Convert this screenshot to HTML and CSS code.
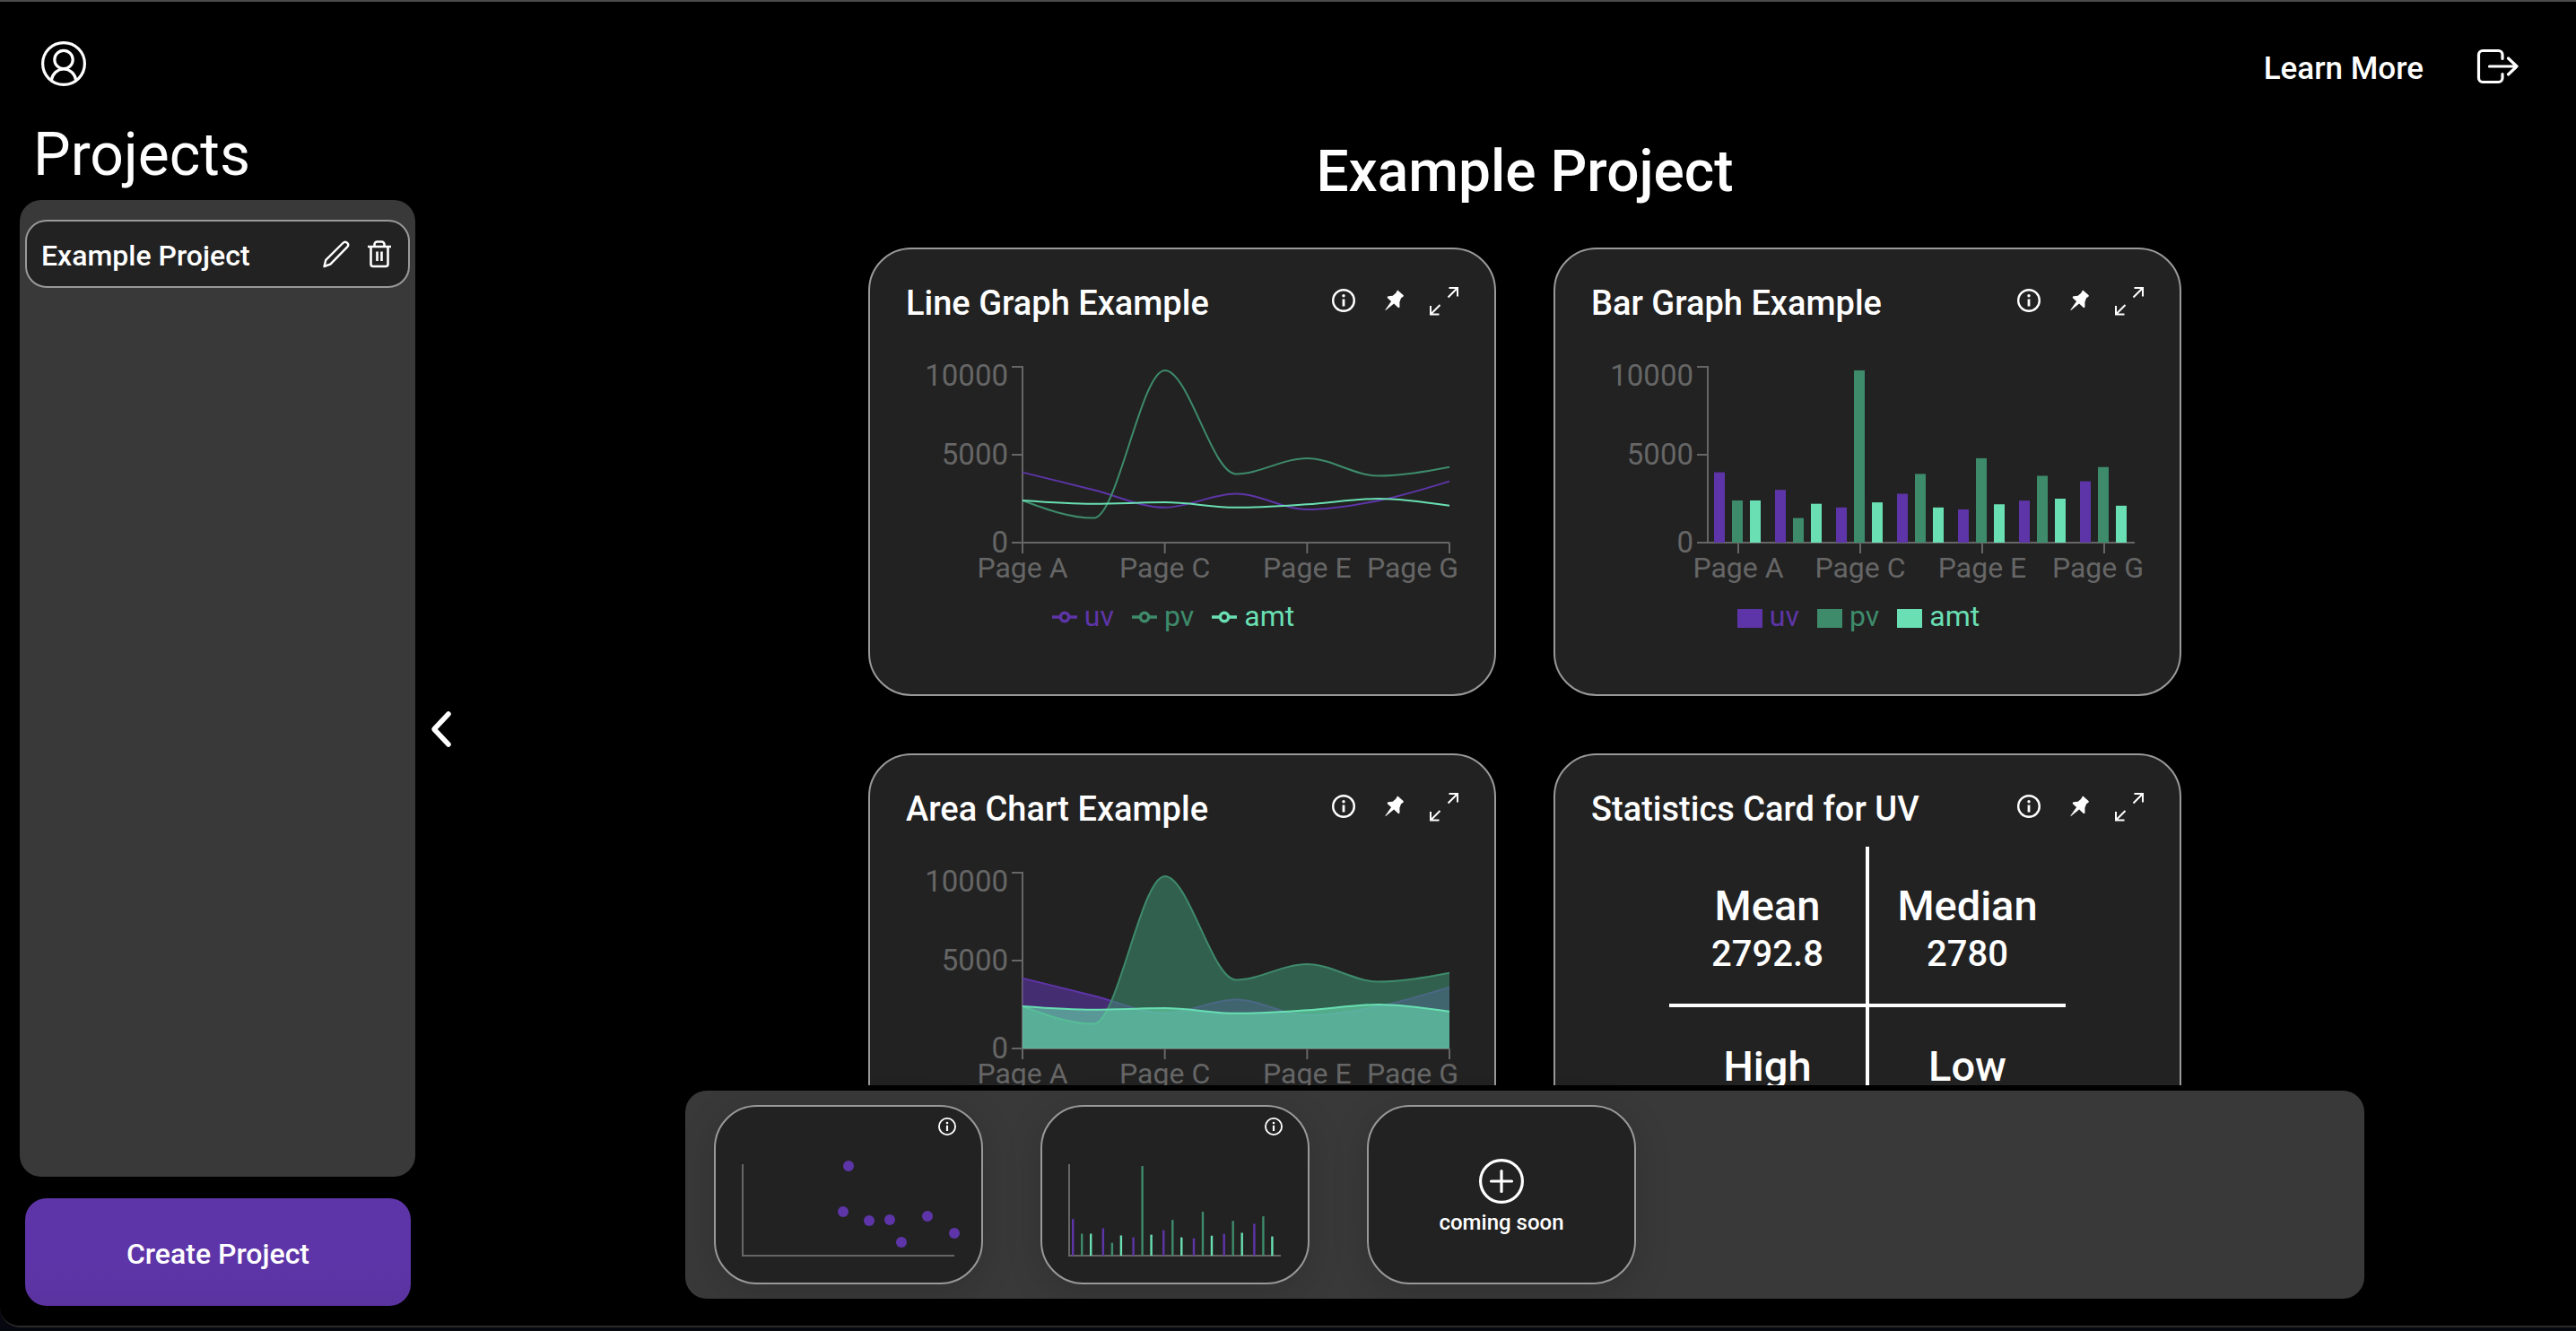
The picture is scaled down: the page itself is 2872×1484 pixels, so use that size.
FILE: index.html
```html
<!DOCTYPE html>
<html lang="en">
<head>
<meta charset="utf-8">
<title>Projects</title>
<meta name="viewport" content="width=device-width, initial-scale=1">
<link rel="stylesheet" href="styles.css">
</head>
<body>
<svg class="sprite" aria-hidden="true">
  <symbol id="icon-info" viewBox="0 0 32 32">
    <circle cx="16" cy="15" r="11.8" fill="none" stroke="currentColor" stroke-width="2.4"/>
    <circle cx="16" cy="9.8" r="1.7" fill="currentColor"/>
    <path d="M16 13.5v8" stroke="currentColor" stroke-width="2.8"/>
  </symbol>
  <symbol id="icon-pin" viewBox="0 0 32 32">
    <path d="M19.600 4.200c.5-.5 1-.5 1.500 0l5.400 4.800c.6.6.4 1.300-.4 1.900l-2 1.300-1.700 4.600.1 4.900c0 1.300-1 1.900-1.900 1l-4.500-4.200-9.200 7.500-.5-.5 6.700-9.400-3.900-3.700c-.9-.9-.4-1.800.8-2.100l4.700-.6 3.500-3z" fill="currentColor"/>
  </symbol>
  <symbol id="icon-expand" viewBox="0 0 32 32">
    <path d="M20.500 11.500 31 1M21.500 1H31v9.500M11.500 20 1 30.500M1 21v9.500h9.500" fill="none" stroke="currentColor" stroke-width="2"/>
  </symbol>
</svg>
<div class="window">
  <aside class="sidebar">
    <button class="icon-button account" type="button" aria-label="Account">
      <svg width="52" height="52" viewBox="0 0 52 52" fill="none" stroke="currentColor" stroke-width="3.200"><circle cx="26" cy="26" r="23.400"/><circle cx="26" cy="21.500" r="10.200"/><path d="M12.300 44.500c1-7.500 6.800-12.500 13.700-12.500s12.700 5 13.700 12.500"/></svg>
    </button>
    <h2 class="sidebar-title">Projects</h2>
    <ul class="project-list">
      <li class="project">
        <span class="project-name">Example Project</span>
        <button class="icon-button" type="button" aria-label="Rename project">
          <svg width="32" height="32" viewBox="0 0 32 32" fill="none" stroke="currentColor" stroke-width="2.400" stroke-linejoin="round"><path d="M2.500 30l1.800-7.200L23.300 4c1.600-1.600 3.500-1.600 4.900-.2s1.300 3.300-.3 4.900L9.300 27.700z"/></svg>
        </button>
        <button class="icon-button" type="button" aria-label="Delete project">
          <svg width="32" height="32" viewBox="0 0 32 32" fill="none" stroke="currentColor" stroke-width="2.600" stroke-linejoin="round"><path d="M3 8h26M10.500 8V5.500a3 3 0 0 1 3-3h5a3 3 0 0 1 3 3V8M6.500 8v19.500a2.500 2.500 0 0 0 2.500 2.500h14a2.500 2.500 0 0 0 2.500-2.500V8M13.500 13.500v10.500M18.500 13.500v10.500"/></svg>
        </button>
      </li>
    </ul>
    <button class="create-project" type="button">Create Project</button>
  </aside>
  <button class="icon-button sidebar-toggle" type="button" aria-label="Collapse sidebar">
    <svg width="24" height="44" viewBox="0 0 24 44" fill="none" stroke="currentColor" stroke-width="5.500" stroke-linecap="round" stroke-linejoin="round"><path d="M20 5 4 22l16 17"/></svg>
  </button>
  <main class="main">
    <nav class="topbar">
      <a class="topbar-link" href="#">Learn More</a>
      <button class="icon-button" type="button" aria-label="Log out">
        <svg width="48" height="48" viewBox="0 0 48 48" fill="none" stroke="currentColor" stroke-width="3.200" stroke-linecap="round" stroke-linejoin="round"><path d="M30 15.500V11a4.500 4.500 0 0 0-4.500-4.500H8A4.500 4.500 0 0 0 3.500 11v26A4.500 4.500 0 0 0 8 41.500h17.500A4.500 4.500 0 0 0 30 37v-4.500M15.500 24H46M36.500 15l9.500 9-9.500 9"/></svg>
      </button>
    </nav>
    <h1 class="page-title">Example Project</h1>
    <div class="board">
      <article class="card">
        <header class="card-header">
          <h2 class="card-title">Line Graph Example</h2>
          <button class="icon-button" type="button" aria-label="Info"><svg width="32" height="32"><use href="#icon-info"/></svg></button>
          <button class="icon-button" type="button" aria-label="Pin"><svg width="32" height="32"><use href="#icon-pin"/></svg></button>
          <button class="icon-button" type="button" aria-label="Expand"><svg width="32" height="32"><use href="#icon-expand"/></svg></button>
        </header>
        <svg class="chart" viewBox="0 0 616 268" data-chart="line" role="img" aria-label="Line graph"></svg>
        <ul class="legend">
          <li class="uv"><svg width="28" height="28" viewBox="0 0 32 32" fill="none" stroke="currentColor" stroke-width="4"><path d="M0 16h10.700M21.300 16H32"/><circle cx="16" cy="16" r="5.300"/></svg>uv</li>
          <li class="pv"><svg width="28" height="28" viewBox="0 0 32 32" fill="none" stroke="currentColor" stroke-width="4"><path d="M0 16h10.700M21.300 16H32"/><circle cx="16" cy="16" r="5.300"/></svg>pv</li>
          <li class="amt"><svg width="28" height="28" viewBox="0 0 32 32" fill="none" stroke="currentColor" stroke-width="4"><path d="M0 16h10.700M21.300 16H32"/><circle cx="16" cy="16" r="5.300"/></svg>amt</li>
        </ul>
      </article>
      <article class="card">
        <header class="card-header">
          <h2 class="card-title">Bar Graph Example</h2>
          <button class="icon-button" type="button" aria-label="Info"><svg width="32" height="32"><use href="#icon-info"/></svg></button>
          <button class="icon-button" type="button" aria-label="Pin"><svg width="32" height="32"><use href="#icon-pin"/></svg></button>
          <button class="icon-button" type="button" aria-label="Expand"><svg width="32" height="32"><use href="#icon-expand"/></svg></button>
        </header>
        <svg class="chart" viewBox="0 0 616 268" data-chart="bar" role="img" aria-label="Bar graph"></svg>
        <ul class="legend">
          <li class="uv"><svg width="28" height="28" viewBox="0 0 28 28"><path d="M0 5h28v21H0z" fill="currentColor"/></svg>uv</li>
          <li class="pv"><svg width="28" height="28" viewBox="0 0 28 28"><path d="M0 5h28v21H0z" fill="currentColor"/></svg>pv</li>
          <li class="amt"><svg width="28" height="28" viewBox="0 0 28 28"><path d="M0 5h28v21H0z" fill="currentColor"/></svg>amt</li>
        </ul>
      </article>
      <article class="card">
        <header class="card-header">
          <h2 class="card-title">Area Chart Example</h2>
          <button class="icon-button" type="button" aria-label="Info"><svg width="32" height="32"><use href="#icon-info"/></svg></button>
          <button class="icon-button" type="button" aria-label="Pin"><svg width="32" height="32"><use href="#icon-pin"/></svg></button>
          <button class="icon-button" type="button" aria-label="Expand"><svg width="32" height="32"><use href="#icon-expand"/></svg></button>
        </header>
        <svg class="chart" viewBox="0 0 616 268" data-chart="area" role="img" aria-label="Area chart"></svg>
      </article>
      <article class="card">
        <header class="card-header">
          <h2 class="card-title">Statistics Card for UV</h2>
          <button class="icon-button" type="button" aria-label="Info"><svg width="32" height="32"><use href="#icon-info"/></svg></button>
          <button class="icon-button" type="button" aria-label="Pin"><svg width="32" height="32"><use href="#icon-pin"/></svg></button>
          <button class="icon-button" type="button" aria-label="Expand"><svg width="32" height="32"><use href="#icon-expand"/></svg></button>
        </header>
        <dl class="stats">
          <div class="stat"><dt>Mean</dt><dd>2792.8</dd></div>
          <div class="stat"><dt>Median</dt><dd>2780</dd></div>
          <div class="stat"><dt>High</dt><dd>4000</dd></div>
          <div class="stat"><dt>Low</dt><dd>1890</dd></div>
        </dl>
      </article>
    </div>
    <section class="dock" aria-label="Available graphs">
      <article class="mini">
        <button class="icon-button mini-info" type="button" aria-label="Info"><svg width="20" height="20" viewBox="3 2 26 26"><use href="#icon-info" width="32" height="32"/></svg></button>
        <svg class="mini-chart" viewBox="0 0 244 112" data-chart="scatter" role="img" aria-label="Scatter plot"></svg>
      </article>
      <article class="mini">
        <button class="icon-button mini-info" type="button" aria-label="Info"><svg width="20" height="20" viewBox="3 2 26 26"><use href="#icon-info" width="32" height="32"/></svg></button>
        <svg class="mini-chart" viewBox="0 0 244 112" data-chart="mini-bar" role="img" aria-label="Bar graph"></svg>
      </article>
      <button class="mini mini-soon" type="button">
        <svg width="52" height="52" viewBox="0 0 52 52" fill="none" stroke="currentColor" stroke-width="3.200" stroke-linecap="round"><circle cx="26" cy="26" r="23.400"/><path d="M14.500 26h23M26 14.500v23"/></svg>
        coming soon
      </button>
    </section>
  </main>
</div>
<script src="charts.js"></script>
</body>
</html>
```
FILE: styles.css
```css
:root {
  --panel: #393939;
  --card: #222;
  --outline: #999;
  --axis: #666;
  --uv: #5e35a8;
  --pv: #3e8b6c;
  --amt: #69dfb3;
}

*,
*::before,
*::after {
  box-sizing: border-box;
}

body {
  margin: 0;
  height: 100vh;
  padding-bottom: 4px;
  background: #06070f;
  color: #fff;
  font-family: Roboto, "Liberation Sans", sans-serif;
  font-size: 32px;
  line-height: 40px;
}

h1,
h2,
ul,
dl,
dd {
  margin: 0;
  padding: 0;
}

ul {
  list-style: none;
}

svg {
  display: block;
}

.sprite {
  position: absolute;
  width: 0;
  height: 0;
}

button {
  border: 0;
  color: inherit;
  font: inherit;
  font-weight: 500;
  cursor: pointer;
}

.icon-button {
  flex: none;
  padding: 0;
  background: none;
}

.window {
  display: flex;
  height: 100%;
  background: #000;
  border-top: 2px solid #4a4a4a;
  border-bottom: 2px solid #2b2b2b;
  border-bottom-left-radius: 22px;
}

/* Sidebar */

.sidebar {
  flex: none;
  display: flex;
  flex-direction: column;
  width: 463px;
  padding: 43px 0 22px 22px;
}

.account {
  align-self: flex-start;
  margin-left: 23px;
}

.sidebar-title {
  margin: 44px 0 18px 15px;
  font-size: 66px;
  line-height: 64px;
  font-weight: 400;
}

.project-list {
  flex: 1;
  margin-bottom: 24px;
  padding: 22px 6px;
  border-radius: 24px;
  background: var(--panel);
}

.project {
  display: flex;
  align-items: center;
  gap: 16px;
  height: 76px;
  padding: 0 16px;
  border: 2px solid var(--outline);
  border-radius: 24px;
  background: var(--card);
}

.project-name {
  flex: 1;
  padding-top: 4px;
  font-weight: 500;
}

.create-project {
  margin: 0 5px 0 6px;
  height: 120px;
  padding-top: 4px;
  border-radius: 24px;
  background: linear-gradient(var(--uv) 60%, #5a339f);
}

.sidebar-toggle {
  align-self: center;
  width: 65px;
  margin-top: 146px;
  padding-left: 17px;
}

/* Main column */

.main {
  flex: 1;
  min-width: 0;
  display: flex;
  flex-direction: column;
  padding-bottom: 30px;
}

.topbar {
  display: flex;
  justify-content: flex-end;
  align-items: center;
  gap: 58px;
  padding: 48px 64px 0 0;
}

.topbar-link {
  padding-top: 6px;
  color: inherit;
  font-size: 35px;
  font-weight: 500;
  text-decoration: none;
}

.page-title {
  margin: 58px 0 48px;
  font-size: 64px;
  line-height: 72px;
  font-weight: 500;
  text-align: center;
}

.board {
  flex: 1;
  min-height: 0;
  display: grid;
  grid-template-columns: repeat(2, minmax(0, 700px));
  grid-auto-rows: max-content;
  justify-content: center;
  gap: 64px;
  margin-bottom: 6px;
  overflow-y: auto;
  scrollbar-width: none;
}

.card {
  min-height: 500px;
  padding: 34px 40px;
  border: 2px solid var(--outline);
  border-radius: 48px;
  background: var(--card);
}

.card-header {
  display: flex;
  align-items: center;
  gap: 24px;
  height: 48px;
}

.card-title {
  flex: 1;
  padding-top: 4px;
  font-size: 38px;
  line-height: 44px;
  font-weight: 500;
}

.chart {
  width: 100%;
  margin-top: 32px;
  overflow: visible;
}

.chart text {
  fill: var(--axis);
  font-size: 32px;
}

.chart .value {
  font-size: 33px;
}

.axis {
  fill: none;
  stroke: var(--axis);
  stroke-width: 2;
}

.line {
  fill: none;
  stroke: currentColor;
  stroke-width: 2;
}

.area {
  fill: currentColor;
  fill-opacity: 0.6;
}

.bar,
.dot {
  fill: currentColor;
}

.uv {
  color: var(--uv);
}

.pv {
  color: var(--pv);
}

.amt {
  color: var(--amt);
}

.legend {
  display: flex;
  justify-content: center;
  margin-top: 7px;
}

.legend li {
  display: flex;
  align-items: center;
  gap: 8px;
  margin-right: 20px;
}

.legend svg {
  margin-top: 2px;
}

.stats {
  display: grid;
  grid-template-columns: 219px 219px;
  grid-auto-rows: 175px;
  justify-content: center;
  gap: 4px;
  width: 442px;
  margin: 20px auto 0;
  background:
    linear-gradient(#fff, #fff) center / 4px 100% no-repeat,
    linear-gradient(#fff, #fff) center / 100% 4px no-repeat;
}

.stat {
  display: flex;
  flex-direction: column;
  justify-content: center;
  padding-top: 8px;
  text-align: center;
}

.stat dt {
  font-size: 47px;
  line-height: 56px;
  font-weight: 500;
}

.stat dd {
  font-size: 40px;
  line-height: 52px;
  font-weight: 500;
}

/* Dock */

.dock {
  display: flex;
  gap: 64px;
  margin: 0 236px;
  padding: 16px 32px;
  border-radius: 24px;
  background: var(--panel);
}

.mini {
  flex: none;
  display: flex;
  flex-direction: column;
  width: 300px;
  height: 200px;
  padding: 12px 28px 0 24px;
  border: 2px solid var(--outline);
  border-radius: 48px;
  background: var(--card);
  box-shadow: 0 8px 40px rgba(0, 0, 0, 0.15);
}

.mini-info {
  align-self: flex-end;
}

.mini-chart {
  width: 100%;
  margin-top: 28px;
  overflow: visible;
}

.mini-soon {
  align-items: center;
  justify-content: center;
  gap: 4px;
  padding: 6px 24px 0;
  font-size: 24px;
  line-height: 32px;
}
```
FILE: charts.js
```js
const pages = ["Page A", "Page B", "Page C", "Page D", "Page E", "Page F", "Page G"];
const series = {
  uv: [4000, 3000, 2000, 2780, 1890, 2390, 3490],
  pv: [2400, 1398, 9800, 3908, 4800, 3800, 4300],
  amt: [2400, 2210, 2290, 2000, 2181, 2500, 2100],
};
const plot = { left: 130, right: 606, top: 17, bottom: 213, width: 476 };
const y = (v) => plot.bottom - (v / 10000) * (plot.bottom - plot.top);

const path = (cls, d) => `<path class="${cls}" d="${d}"/>`;

// Monotone cubic interpolation through the points.
function curve(points) {
  const n = points.length;
  const slope = [];
  for (let i = 0; i < n - 1; i++) {
    slope.push((points[i + 1][1] - points[i][1]) / (points[i + 1][0] - points[i][0]));
  }
  const t = new Array(n);
  for (let i = 1; i < n - 1; i++) {
    const a = slope[i - 1];
    const b = slope[i];
    t[i] = (Math.sign(a) + Math.sign(b)) * Math.min(Math.abs(a), Math.abs(b), Math.abs(a + b) / 4) || 0;
  }
  t[0] = (3 * slope[0] - t[1]) / 2;
  t[n - 1] = (3 * slope[n - 2] - t[n - 2]) / 2;
  let d = `M${points[0]}`;
  for (let i = 1; i < n; i++) {
    const [x0, y0] = points[i - 1];
    const [x1, y1] = points[i];
    const dx = (x1 - x0) / 3;
    d += `C${x0 + dx},${y0 + dx * t[i - 1]} ${x1 - dx},${y1 - dx * t[i]} ${x1},${y1}`;
  }
  return d;
}

function axes(tickX) {
  let d = `M118 ${plot.top}H${plot.left}V${plot.bottom}M118 ${y(5000)}H${plot.left}M118 ${plot.bottom}H${plot.right}`;
  let labels =
    `<text class="value" x="114" y="38" text-anchor="end">10000</text>` +
    `<text class="value" x="114" y="126" text-anchor="end">5000</text>` +
    `<text class="value" x="114" y="224" text-anchor="end">0</text>`;
  for (let i = 0; i < pages.length; i += 2) {
    const x = tickX(i);
    d += `M${x} ${plot.bottom}v12`;
    const last = i === pages.length - 1;
    labels += `<text x="${last ? 616 : x}" y="252" text-anchor="${last ? "end" : "middle"}">${pages[i]}</text>`;
  }
  return path("axis", d) + labels;
}

const pointX = (i) => plot.left + (i * plot.width) / 6;
const bandX = (i) => plot.left + 34 + i * 68;

function curves(filled) {
  return Object.entries(series).map(([name, values]) => {
    const d = curve(values.map((v, i) => [pointX(i), y(v)]));
    const area = filled ? path("area", `${d}V${plot.bottom}H${plot.left}Z`) : "";
    return `<g class="${name}">${area}${path("line", d)}</g>`;
  }).join("");
}

function bars(left, band, offset, step, width, bottom, height) {
  return Object.entries(series).map(([name, values], s) =>
    `<g class="${name}">` + values.map((v, i) => {
      const h = (v / 10000) * height;
      return `<rect class="bar" x="${left + i * band + offset + s * step}" y="${bottom - h}" width="${width}" height="${h}"/>`;
    }).join("") + "</g>").join("");
}

const miniAxes = path("axis", "M6 4V106H242");
const scatter = [[118, 100], [112, 49], [141, 39], [164, 40], [177, 15], [206, 44], [236, 25]];

const charts = {
  line: () => axes(pointX) + curves(false),
  area: () => axes(pointX) + curves(true),
  bar: () => axes(bandX) + bars(plot.left, 68, 7, 20, 12, plot.bottom, 196),
  "mini-bar": () => miniAxes + bars(6, 33.7, 3, 10, 2.4, 106, 102),
  scatter: () => miniAxes + scatter.map(([x, v]) => `<circle class="dot uv" cx="${x + 6}" cy="${106 - v}" r="6"/>`).join(""),
};

document.querySelectorAll("[data-chart]").forEach((svg) => {
  svg.innerHTML = charts[svg.dataset.chart]();
});
```
